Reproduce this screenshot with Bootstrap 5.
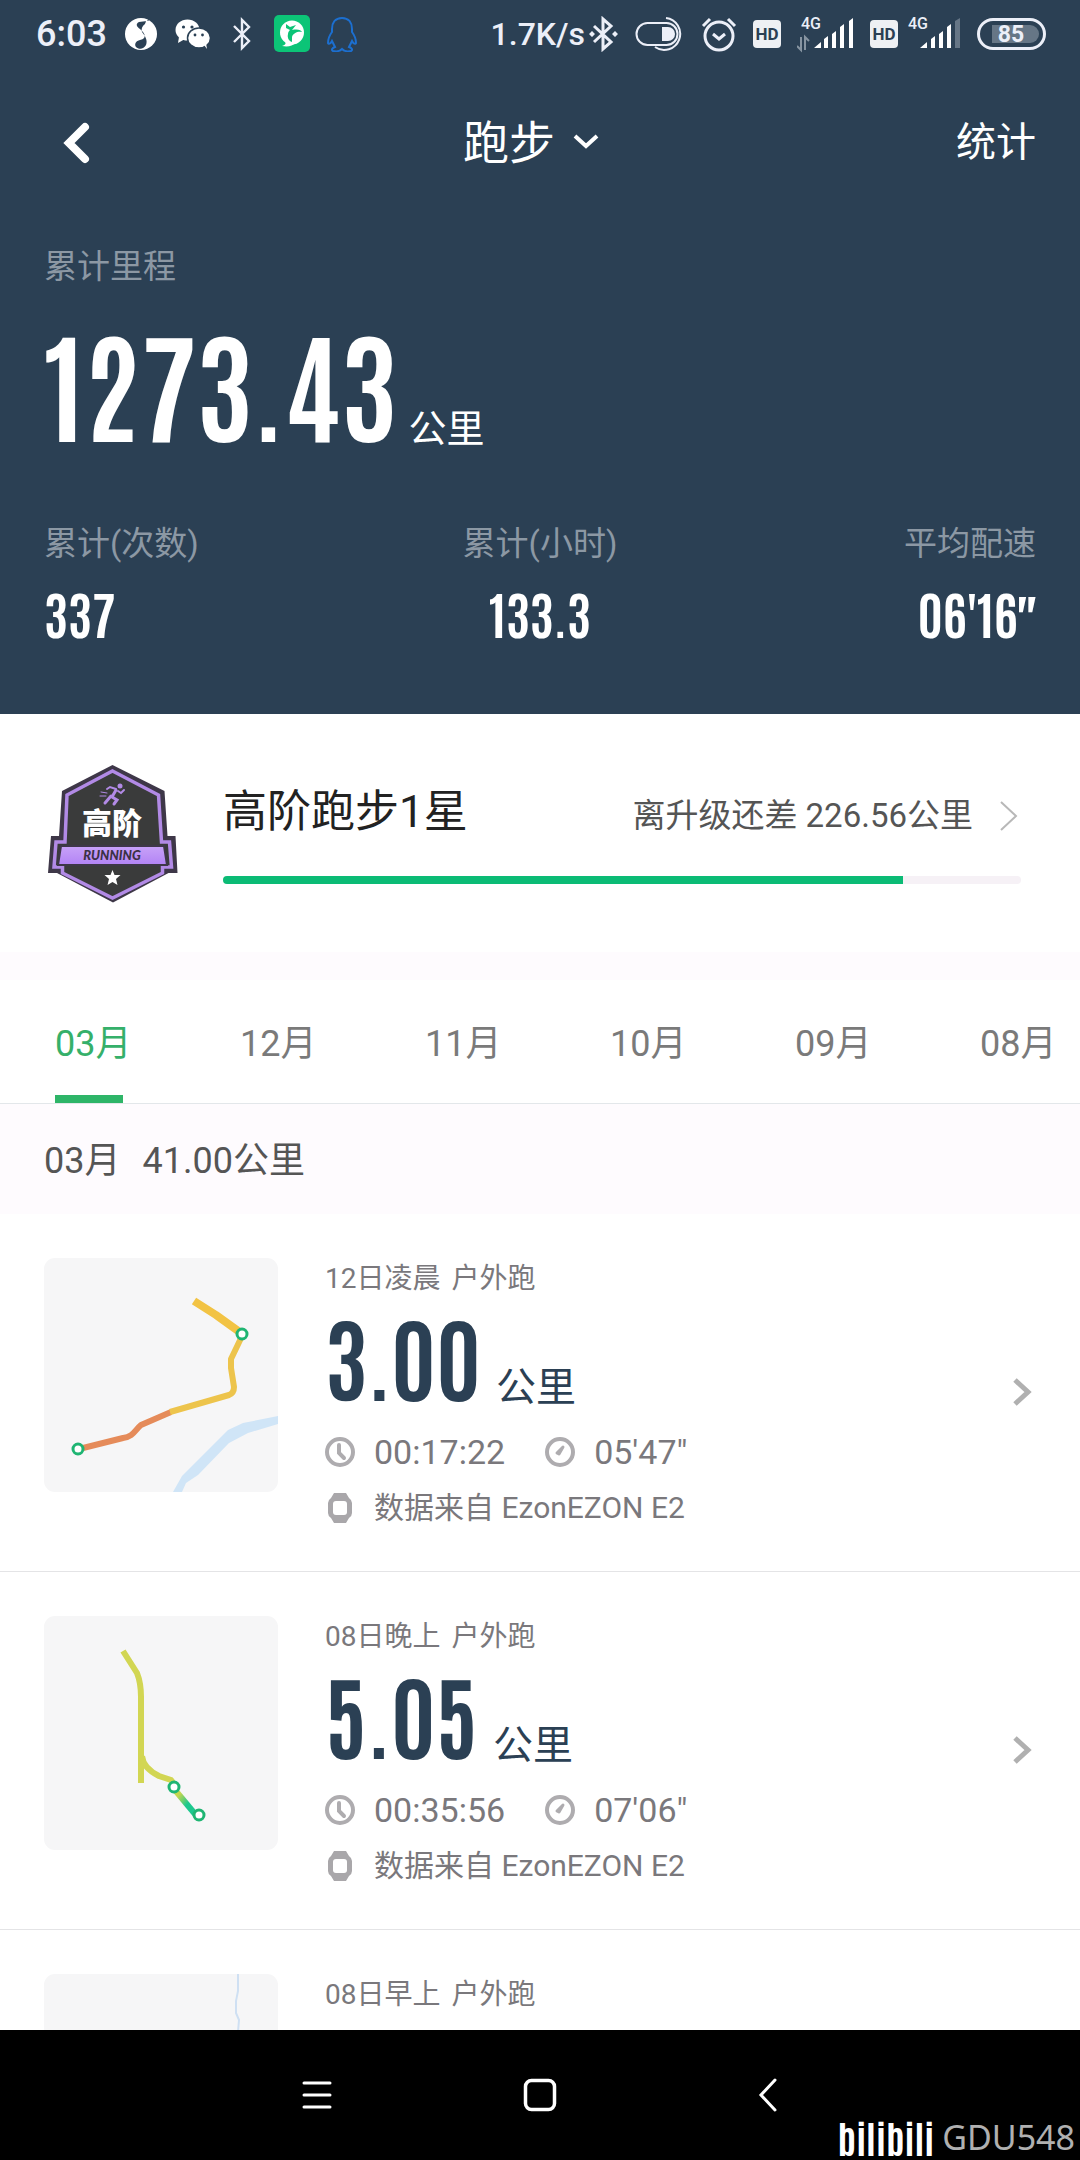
<!DOCTYPE html>
<html lang="zh-CN">
<head>
<meta charset="utf-8">
<meta name="viewport" content="width=device-width, initial-scale=1">
<title>跑步</title>
<link rel="stylesheet" href="https://cdn.jsdelivr.net/npm/bootstrap@5.3.0/dist/css/bootstrap.min.css">
<style>
  :root { --navy: #2b4054; --gutter: 44px; }
  body { font-family: Roboto, "Noto Sans CJK SC", sans-serif; background: #fff; color: #7a787c; }
  svg { display: block; flex: none; }
  .plain-btn { border: 0; background: none; padding: 0; color: inherit; }
  .hero-zone { background: var(--navy); color: #fff; height: 714px; }
  .status-bar { height: 67px; padding: 0 34px 0 36px; color: #eceff8; font-weight: 500; font-size: 36px; line-height: 40px; }
  .status-bar .gap-wide { gap: 23px; }
  .net-speed { font-size: 32px; }
  .title-bar { height: 150px; padding: 2px var(--gutter) 0; display: grid; grid-template-columns: 1fr auto 1fr; align-items: center; }
  .title-pick { font-size: 46px; line-height: 60px; gap: 16px; }
  .stat-link { font-size: 40px; line-height: 60px; justify-self: end; text-decoration: none; color: inherit; }
  .hero-body { padding: 28px var(--gutter) 0; }
  .dim-label { font-size: 33px; line-height: 44px; color: #8c98a4; }
  .num-face { font-family: "Antonio", "Oswald", "Roboto Condensed", sans-serif; font-weight: 700; }
  .total-num { font-size: 121px; line-height: 140px; }
  .total-unit { font-size: 38px; }
  .total-line { height: 209px; padding-top: 22px; gap: 11px; }
  .sub-num { font-size: 51px; line-height: 60px; margin-top: 16px; }
  .sec-mark { font-family: "Oswald", sans-serif; }
  .level-link { height: 238px; padding: 2px 59px 0 47px; gap: 45px; text-decoration: none; color: #555; }
  .level-title { font-size: 44px; line-height: 56px; color: #222; }
  .level-note { font-size: 33px; line-height: 48px; gap: 24px; }
  .level-bar { height: 8px; border-radius: 4px; background: #f6f1f6; --bs-progress-bar-bg: #0bbb75; margin-top: 36px; }
  .band { background: #fefbfe; }
  .band-gap { height: 28px; }
  .month-tabs { height: 124px; padding-left: 55px; gap: 113px; border-bottom: 1px solid #e3e7ea; font-size: 36px; line-height: 48px; overflow: hidden; }
  .month-tabs .nav-link { padding: 40px 0 0; width: 72px; white-space: nowrap; color: #7a7a7a; flex: none; border-radius: 0; position: relative; }
  .month-tabs .nav-link.active { color: #35b06a; }
  .month-tabs .nav-link.active::after { content: ""; position: absolute; left: 0; bottom: 0; width: 68px; height: 8px; background: #2eb568; }
  .month-sum { height: 110px; padding: 4px var(--gutter) 0; font-size: 36px; line-height: 48px; color: #555; gap: 22px; }
  .run-row { padding: 44px 46px 0 44px; height: 358px; border-bottom: 1px solid #e4e4e6; text-decoration: none; gap: 47px; color: #7a787c; }
  .run-map { width: 234px; height: 234px; border-radius: 11px; background: #f6f6f7; overflow: hidden; }
  .run-when { font-size: 28px; line-height: 42px; gap: 11px; }
  .run-dist { height: 124px; gap: 15px; color: var(--navy); padding-top: 5px; }
  .run-num { font-size: 91px; line-height: 100px; }
  .run-unit { font-size: 40px; }
  .run-meta { font-size: 34px; line-height: 44px; gap: 19px; height: 56px; }
  .run-pace { margin-left: 21px; }
  .run-src { font-size: 30px; line-height: 40px; gap: 19px; height: 56px; }
  .go-mark { height: 267px; }
  .sys-nav { height: 130px; background: #000; color: #fff; position: relative; padding: 0 302px; }
  .water-mark { position: absolute; right: 5px; bottom: 0; gap: 8px; color: #b0b0b0; font-family: "Noto Sans", sans-serif; font-size: 34px; line-height: 46px; }
  .brand-word { font-size: 38px; color: #fff; }
</style>
</head>
<body>
<div class="vh-100 d-flex flex-column overflow-hidden">
  <header class="hero-zone flex-shrink-0">
    <div class="status-bar d-flex justify-content-between align-items-center">
      <div class="d-flex align-items-center gap-wide">
        <div class="d-flex align-items-center gap-3">
          <span>6:03</span>
          <svg width="36" height="36" viewBox="0 0 36 36"><circle cx="18" cy="18" r="16" fill="#fff"/><path d="M28 1 24 5 16 6c-4 2-2 5 1 7l3 3c3 4 2 7-3 8-4 1-6 4-4 7 3 3 8 2 10-2 2-5-1-9-4-13-1-3 0-6 3-8l5-5z" fill="#2b4054"/><path d="m23 5-2 7c3-1 5-3 6-7z" fill="#fff"/></svg>
          <svg width="35" height="36" viewBox="0 0 35 36"><ellipse cx="12.500" cy="14" rx="12" ry="10.500" fill="#fff"/><path d="m4 21-1 6 7-4z" fill="#fff"/><ellipse cx="24" cy="22" rx="11.500" ry="10" fill="#fff" stroke="#2b4054" stroke-width="1.500"/><path d="m29 29 3 4-1-6z" fill="#fff"/><g fill="#2b4054"><circle cx="8.500" cy="11" r="1.600"/><circle cx="17" cy="11" r="1.600"/><circle cx="20" cy="19" r="1.400"/><circle cx="27.500" cy="19" r="1.400"/></g></svg>
        </div>
        <svg width="18" height="34" viewBox="0 0 18 34"><path d="m1 9 15 15-7 7V3l7 7L1 25" fill="none" stroke="#eceff8" stroke-width="2.400"/></svg>
        <div class="d-flex align-items-center gap-3">
          <svg width="36" height="37" viewBox="0 0 36 37"><rect width="36" height="37" rx="5" fill="#0cc477"/><circle cx="18" cy="17.500" r="12" fill="#fff"/><path d="M8 31c4-1 4-3 3-5l10 2c-2 3-7 4-13 3z" fill="#fff"/><path d="m12 9 4 3 6-2-4 5c6-1 9 0 10 2-4-1-9 1-10 5v5c-3-1-5-4-4-8 0-2 1-3 2-4l-4-2z" fill="#0cc477"/></svg>
          <svg width="32" height="36" viewBox="0 0 32 36" fill="none" stroke="#1c6fd0" stroke-width="2"><path d="M16 2C9 2 6 7 6 13v3c-3 4-4 8-4 11 1 2 3 0 4-2l3 6c-3 1-4 3-2 4 3 1 7 0 9-2 2 2 6 3 9 2 2-1 1-3-2-4l3-6c1 2 3 4 4 2 0-3-1-7-4-11v-3c0-6-3-11-10-11z"/></svg>
        </div>
      </div>
      <div class="d-flex align-items-center">
        <span class="net-speed me-1">1.7K/s</span>
        <svg width="30" height="36" viewBox="0 0 30 36"><path d="m5 10 17 16-8 7V3l8 7L5 26" fill="none" stroke="#eceff8" stroke-width="3"/><path d="m3 15 3 3-3 3-3-3zM26 15l3 3-3 3-3-3z" fill="#eceff8"/></svg>
        <svg class="ms-3" width="50" height="36" viewBox="0 0 50 36"><g fill="none" stroke="#eceff8" stroke-width="2"><rect x="1.500" y="7" width="41" height="22" rx="11"/><path d="M31 2a16 16 0 1 1-11 29"/></g><path d="M27 11h6a7 7 0 0 1 0 14h-6z" fill="#eceff8"/></svg>
        <svg class="ms-3" width="36" height="36" viewBox="0 0 36 36" fill="none" stroke="#eceff8" stroke-width="3"><circle cx="18" cy="20" r="14"/><path d="m12 18 6 5 6-5M2 10l7-7M34 10l-7-7"/></svg>
        <svg class="ms-3" width="28" height="28" viewBox="0 0 28 28"><rect width="28" height="28" rx="4" fill="#eef0f3"/><text x="14" y="20" text-anchor="middle" font-size="17" font-weight="700" fill="#2b4054">HD</text></svg>
        <svg class="ms-3" width="58" height="46" viewBox="1 -5 58 46"><text x="5" y="13" font-size="16" font-weight="500" fill="#eceff8">4G</text><path d="M5 21v13l-4-4M9 34V21l4 4" fill="none" stroke="#8794a1" stroke-width="2"/><g fill="#fff"><path d="m18 32 7-6v6zM28 23l4-3v12h-4zM36 18l4-3v17h-4zM44 11l4-3v24h-4zM53 5l4-3v30h-4z"/></g></svg>
        <svg class="ms-2 me-2" width="36" height="28" viewBox="-7 0 36 28"><rect width="28" height="28" rx="4" fill="#eef0f3"/><text x="14" y="20" text-anchor="middle" font-size="17" font-weight="700" fill="#2b4054">HD</text></svg>
        <svg width="54" height="46" viewBox="0 -5 54 46"><text x="1" y="13" font-size="16" font-weight="500" fill="#eceff8">4G</text><g fill="#fff"><path d="m13 32 7-6v6zM24 23l4-3v12h-4zM32 18l4-3v17h-4zM40 11l4-3v24h-4z"/><path d="m48 5 5-3v30h-5z" fill="#667686"/></g></svg>
        <svg class="ms-3" width="69" height="32" viewBox="0 0 69 32"><rect x="1.500" y="1.500" width="66" height="29" rx="14.500" fill="none" stroke="#eceff8" stroke-width="3"/><path d="M15 7h38a9 9 0 0 1 0 18H15z" fill="#667686"/><text x="34" y="24" text-anchor="middle" font-size="23" font-weight="700" fill="#eceff8">85</text></svg>
      </div>
    </div>

    <div class="title-bar">
      <button type="button" class="plain-btn ps-3 text-start" aria-label="返回"><svg width="32" height="44" viewBox="0 0 32 44" fill="none" stroke="#fff" stroke-width="8" stroke-linecap="round"><path d="M25 6 9 22l16 16"/></svg></button>
      <button type="button" class="plain-btn title-pick pe-3 d-flex align-items-center">跑步<svg width="30" height="24" viewBox="0 0 30 24" fill="none" stroke="#fff" stroke-width="4"><path d="m4 5 11 10L26 5"/></svg></button>
      <a href="#" class="stat-link">统计</a>
    </div>

    <div class="hero-body">
      <div class="dim-label">累计里程</div>
      <div class="total-line d-flex align-items-baseline"><span class="num-face total-num">1273.43</span><span class="total-unit">公里</span></div>
      <div class="row pt-4">
        <div class="col"><div class="dim-label">累计(次数)</div><div class="num-face sub-num">337</div></div>
        <div class="col text-center"><div class="dim-label">累计(小时)</div><div class="num-face sub-num">133.3</div></div>
        <div class="col text-end"><div class="dim-label">平均配速</div><div class="num-face sub-num">06'16<span class="sec-mark">"</span></div></div>
      </div>
    </div>
  </header>

  <main class="flex-grow-1 overflow-hidden">
    <a href="#" class="level-link d-flex align-items-center">
      <svg width="131" height="138" viewBox="0 1 131 138">
        <defs><linearGradient id="lilac" x1="0" y1="0" x2="0" y2="1"><stop offset="0" stop-color="#c8a2f8"/><stop offset="1" stop-color="#b283f5"/></linearGradient></defs>
        <path d="m65.500 1 52 26 3 45h8l2 37h-9l-55.500 29.500L10 109H1l3-37h8l3-45z" fill="#3e3748"/>
        <path d="m65.500 7 46 24 3 47h8l2 25h-9v6l-50 25-50-25v-6H7l2-25h9l2-47z" fill="#3a3b3b" stroke="#b28ae6" stroke-width="3.500"/>
        <path d="M14 82h103l3 19H11z" fill="url(#lilac)" stroke="#3e3748" stroke-width="2"/>
        <text x="65" y="70" text-anchor="middle" font-family="Noto Sans CJK SC" font-weight="900" font-size="30" fill="#fff">高阶</text>
        <text x="65" y="96" text-anchor="middle" font-family="Lato" font-weight="900" font-style="italic" font-size="13" fill="#3b3145">RUNNING</text>
        <path d="m65.500 106 2 5h6l-4.500 4 1.500 6-5-3-5 3 1.500-6-4.500-4h6z" fill="#fff"/>
        <g fill="none" stroke="#b28ae6" stroke-linecap="round"><path d="m69 26-4 7 5 3-3 4M64 32l-6 7" stroke-width="3"/><path d="m69 25-6-2-3 2M71 27l3 2 3-3" stroke-width="2"/><path d="m54 28 6 1M53 32h6" stroke-width="1"/></g><circle cx="73" cy="22" r="2.500" fill="#b28ae6"/>
      </svg>
      <div class="flex-grow-1">
        <div class="d-flex justify-content-between align-items-end">
          <span class="level-title">高阶跑步1星</span>
          <span class="level-note d-flex align-items-center">离升级还差 226.56公里<svg width="24" height="34" viewBox="0 0 24 34" fill="none" stroke="#b8b8b8" stroke-width="2"><path d="m4 3 15 14L4 31"/></svg></span>
        </div>
        <div class="progress level-bar" role="progressbar" aria-label="升级进度" aria-valuenow="85" aria-valuemin="0" aria-valuemax="100"><div class="progress-bar" style="width:85.2%"></div></div>
      </div>
    </a>

    <div class="band band-gap"></div>
    <nav class="nav flex-nowrap month-tabs">
      <a class="nav-link active" href="#">03月</a>
      <a class="nav-link" href="#">12月</a>
      <a class="nav-link" href="#">11月</a>
      <a class="nav-link" href="#">10月</a>
      <a class="nav-link" href="#">09月</a>
      <a class="nav-link" href="#">08月</a>
    </nav>
    <div class="band month-sum d-flex align-items-center"><span>03月</span><span>41.00公里</span></div>

    <div>
      <a href="#" class="run-row d-flex">
        <svg class="run-map" viewBox="0 0 234 234">
          <path d="m129 234 9-16 46-46 15-7 35-7v8l-30 9-19 10-31 32-12 8-4 9z" fill="#d0e5f7"/>
          <g fill="none" stroke-width="6" stroke-linejoin="round"><path d="m39 190 40-10c10-1 12-8 18-13l30-13" stroke="#e58b5a"/><path d="m126 154 59-17q5-2 5-8l-3-19v-9l12-25" stroke="#edc44c"/><path d="m150 43 22 14 25 18" stroke="#f2c344" stroke-width="8"/></g>
          <g fill="#fff" stroke="#1fb573" stroke-width="3"><circle cx="34" cy="191" r="5"/><circle cx="198" cy="76" r="5"/></g>
        </svg>
        <div class="flex-grow-1">
          <div class="run-when d-flex"><span>12日凌晨</span><span>户外跑</span></div>
          <div class="run-dist d-flex align-items-baseline"><span class="num-face run-num">3.00</span><span class="run-unit">公里</span></div>
          <div class="run-meta d-flex align-items-center">
            <svg width="30" height="30" viewBox="0 0 30 30" fill="none" stroke="#aeacaf" stroke-width="4"><circle cx="15" cy="15" r="13"/><path d="M14 8v8l5 5" stroke-linecap="round"/></svg><span>00:17:22</span>
            <svg class="run-pace" width="30" height="30" viewBox="0 0 30 30" fill="none" stroke="#aeacaf" stroke-width="4"><circle cx="15" cy="15" r="13"/><path d="m14 17 4-7-6 6z" stroke-width="3" stroke-linejoin="round"/></svg><span>05'47"</span>
          </div>
          <div class="run-src d-flex align-items-center">
            <svg width="30" height="30" viewBox="0 0 30 30"><path d="M9 0h12l3 5q3 2 3 5v10q0 3-3 5l-3 5H9l-3-5q-3-2-3-5V10q0-3 3-5z" fill="#a9a7aa"/><rect x="8" y="8" width="14" height="14" rx="3" fill="#fff"/></svg><span>数据来自 EzonEZON E2</span>
          </div>
        </div>
        <div class="go-mark d-flex align-items-center"><svg width="24" height="34" viewBox="0 0 24 34" fill="none" stroke="#b0b0b0" stroke-width="5"><path d="m5 5 13 12L5 29"/></svg></div>
      </a>

      <a href="#" class="run-row d-flex">
        <svg class="run-map" viewBox="0 0 234 234">
          <defs><linearGradient id="fade" x1="0" y1="0" x2="1" y2="1"><stop offset="0.200" stop-color="#c4d64e"/><stop offset="0.600" stop-color="#1cc88e"/></linearGradient></defs>
          <g fill="none" stroke="#d2d653" stroke-width="6"><path d="m79 35 14 22q4 10 4 24v86"/><path d="M98 140q1 12 17 20l12 4 3 4"/><path d="m131 174 20 24" stroke="url(#fade)"/></g>
          <g fill="#fff" stroke="#1fb573" stroke-width="3"><circle cx="130" cy="171" r="5"/><circle cx="155" cy="199" r="5"/></g>
        </svg>
        <div class="flex-grow-1">
          <div class="run-when d-flex"><span>08日晚上</span><span>户外跑</span></div>
          <div class="run-dist d-flex align-items-baseline"><span class="num-face run-num">5.05</span><span class="run-unit">公里</span></div>
          <div class="run-meta d-flex align-items-center">
            <svg width="30" height="30" viewBox="0 0 30 30" fill="none" stroke="#aeacaf" stroke-width="4"><circle cx="15" cy="15" r="13"/><path d="M14 8v8l5 5" stroke-linecap="round"/></svg><span>00:35:56</span>
            <svg class="run-pace" width="30" height="30" viewBox="0 0 30 30" fill="none" stroke="#aeacaf" stroke-width="4"><circle cx="15" cy="15" r="13"/><path d="m14 17 4-7-6 6z" stroke-width="3" stroke-linejoin="round"/></svg><span>07'06"</span>
          </div>
          <div class="run-src d-flex align-items-center">
            <svg width="30" height="30" viewBox="0 0 30 30"><path d="M9 0h12l3 5q3 2 3 5v10q0 3-3 5l-3 5H9l-3-5q-3-2-3-5V10q0-3 3-5z" fill="#a9a7aa"/><rect x="8" y="8" width="14" height="14" rx="3" fill="#fff"/></svg><span>数据来自 EzonEZON E2</span>
          </div>
        </div>
        <div class="go-mark d-flex align-items-center"><svg width="24" height="34" viewBox="0 0 24 34" fill="none" stroke="#b0b0b0" stroke-width="5"><path d="m5 5 13 12L5 29"/></svg></div>
      </a>

      <a href="#" class="run-row d-flex">
        <svg class="run-map" viewBox="0 0 234 234"><path d="M194 0v17l-2 10v12l3 7-1 12v20" fill="none" stroke="#cfe0f3" stroke-width="2"/></svg>
        <div class="flex-grow-1"><div class="run-when d-flex"><span>08日早上</span><span>户外跑</span></div></div>
      </a>
    </div>
  </main>

  <footer class="sys-nav flex-shrink-0 d-flex justify-content-between align-items-center">
    <button type="button" class="plain-btn" aria-label="最近任务"><svg width="30" height="32" viewBox="0 0 30 32" stroke="#fff" stroke-width="3" stroke-linecap="round"><path d="M2 4h26M2 16h26M2 28h26"/></svg></button>
    <button type="button" class="plain-btn" aria-label="主屏幕"><svg width="34" height="34" viewBox="0 0 34 34" fill="none" stroke="#fff" stroke-width="3.500"><rect x="2.500" y="2.500" width="29" height="29" rx="6"/></svg></button>
    <button type="button" class="plain-btn" aria-label="返回"><svg width="30" height="34" viewBox="-10 0 30 34" fill="none" stroke="#fff" stroke-width="3" stroke-linecap="round"><path d="M17 2 3 17l14 15"/></svg></button>
    <div class="water-mark d-flex align-items-end">
      <span class="num-face brand-word">bilibili</span>
      <span>GDU548</span>
    </div>
  </footer>
</div>
<script src="https://cdn.jsdelivr.net/npm/bootstrap@5.3.0/dist/js/bootstrap.bundle.min.js"></script>
</body>
</html>
